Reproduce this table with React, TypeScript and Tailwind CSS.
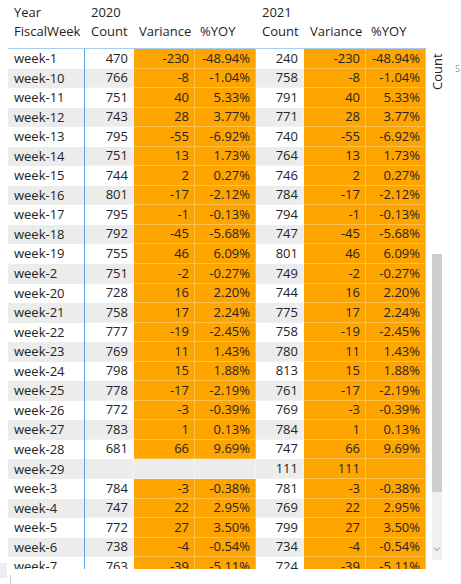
import clsx from "clsx";

type Row = {
  week: string;
  c20: string;
  v20: string;
  y20: string;
  c21: string;
  v21: string;
  y21: string;
  blank20?: boolean;
};

const data: [string, string, string, string, string, string, string][] = [
  ["week-1", "470", "-230", "-48.94%", "240", "-230", "-48.94%"],
  ["week-10", "766", "-8", "-1.04%", "758", "-8", "-1.04%"],
  ["week-11", "751", "40", "5.33%", "791", "40", "5.33%"],
  ["week-12", "743", "28", "3.77%", "771", "28", "3.77%"],
  ["week-13", "795", "-55", "-6.92%", "740", "-55", "-6.92%"],
  ["week-14", "751", "13", "1.73%", "764", "13", "1.73%"],
  ["week-15", "744", "2", "0.27%", "746", "2", "0.27%"],
  ["week-16", "801", "-17", "-2.12%", "784", "-17", "-2.12%"],
  ["week-17", "795", "-1", "-0.13%", "794", "-1", "-0.13%"],
  ["week-18", "792", "-45", "-5.68%", "747", "-45", "-5.68%"],
  ["week-19", "755", "46", "6.09%", "801", "46", "6.09%"],
  ["week-2", "751", "-2", "-0.27%", "749", "-2", "-0.27%"],
  ["week-20", "728", "16", "2.20%", "744", "16", "2.20%"],
  ["week-21", "758", "17", "2.24%", "775", "17", "2.24%"],
  ["week-22", "777", "-19", "-2.45%", "758", "-19", "-2.45%"],
  ["week-23", "769", "11", "1.43%", "780", "11", "1.43%"],
  ["week-24", "798", "15", "1.88%", "813", "15", "1.88%"],
  ["week-25", "778", "-17", "-2.19%", "761", "-17", "-2.19%"],
  ["week-26", "772", "-3", "-0.39%", "769", "-3", "-0.39%"],
  ["week-27", "783", "1", "0.13%", "784", "1", "0.13%"],
  ["week-28", "681", "66", "9.69%", "747", "66", "9.69%"],
  ["week-29", "", "", "", "111", "111", ""],
  ["week-3", "784", "-3", "-0.38%", "781", "-3", "-0.38%"],
  ["week-4", "747", "22", "2.95%", "769", "22", "2.95%"],
  ["week-5", "772", "27", "3.50%", "799", "27", "3.50%"],
  ["week-6", "738", "-4", "-0.54%", "734", "-4", "-0.54%"],
  ["week-7", "763", "-39", "-5.11%", "724", "-39", "-5.11%"],
];

const rows: Row[] = data.map(([week, c20, v20, y20, c21, v21, y21]) => ({
  week,
  c20,
  v20,
  y20,
  c21,
  v21,
  y21,
  blank20: c20 === "",
}));

function Cell({ w, orange, children }: { w: string; orange?: boolean; children?: React.ReactNode }) {
  return (
    <div
      className={clsx(
        "h-full flex items-center justify-end pr-[5px] border-r border-b border-white/30",
        w,
        orange && "bg-[#ffa500]"
      )}
    >
      {children}
    </div>
  );
}

export default function App() {
  return (
    <div
      className="relative w-[461px] h-[584px] overflow-hidden bg-white text-[#252423] text-[13px]"
      style={{ fontFamily: '"Open Sans", "Noto Sans", sans-serif' }}
    >
      <div className="flex">
        <div className="ml-[8px] w-[418px]">
          {/* header */}
          <div className="flex h-[49px] pt-[3px] border-b border-[#a9cdf2] leading-[19px]">
            <div className="w-[77px] pl-[6px]">
              <div>Year</div>
              <div>FiscalWeek</div>
            </div>
            <div className="w-[49px] pl-[6px]">
              <div>2020</div>
              <div>Count</div>
            </div>
            <div className="w-[61px] pl-[5px] pt-[19px]">Variance</div>
            <div className="w-[61px] pl-[5px] pt-[19px]">%YOY</div>
            <div className="w-[48px] pl-[6px]">
              <div>2021</div>
              <div>Count</div>
            </div>
            <div className="w-[62px] pl-[6px] pt-[19px]">Variance</div>
            <div className="w-[60px] pl-[5px] pt-[19px]">%YOY</div>
          </div>

          {/* body */}
          <div className="h-[520px] overflow-hidden">
            {rows.map((r, i) => (
              <div key={r.week} className={clsx("flex h-[19.55px]", i % 2 === 1 && "bg-[#ececec]")}>
                <div className="w-[77px] h-full flex items-center pl-[6px] border-r border-[#5ea4ea]">{r.week}</div>
                <Cell w="w-[49px]">{r.c20}</Cell>
                <Cell w="w-[61px]" orange={!r.blank20}>{r.v20}</Cell>
                <Cell w="w-[61px]" orange={!r.blank20}>{r.y20}</Cell>
                <Cell w="w-[48px]">{r.c21}</Cell>
                <Cell w="w-[62px]" orange>{r.v21}</Cell>
                <Cell w="w-[60px]" orange>{r.y21}</Cell>
              </div>
            ))}
          </div>
        </div>

        {/* right side: axis title and scrollbar */}
        <div className="flex flex-col ml-[6px] pt-[52px]">
          <div className="h-[38px] leading-[11px] text-[13px] text-[#252423] [writing-mode:vertical-rl] rotate-180 w-[11px]">
            Count
          </div>
          <div className="mt-[164px] w-[10px] h-[306px] bg-[#f0f0f0] flex flex-col">
            <div className="h-[238px] bg-[#cdcdcd]" />
            <div className="flex-1 flex items-end justify-center pb-[8px]">
              <svg width="8" height="6" viewBox="0 0 8 6" fill="none" stroke="#888" strokeWidth="1">
                <path d="M1 1.5 L4 4.5 L7 1.5" />
              </svg>
            </div>
          </div>
        </div>
        <div className="ml-[12px] mt-[64px] text-[9px] leading-[10px] text-[#999]">5</div>
      </div>

      {/* bottom-left resize handle */}
      <div className="absolute left-0 top-[563px] w-[7px] h-[15px] bg-[#eeeeee]" />
      <div className="absolute left-[10px] top-[575px] w-px h-[9px] bg-[#d0d0d0]" />
    </div>
  );
}
